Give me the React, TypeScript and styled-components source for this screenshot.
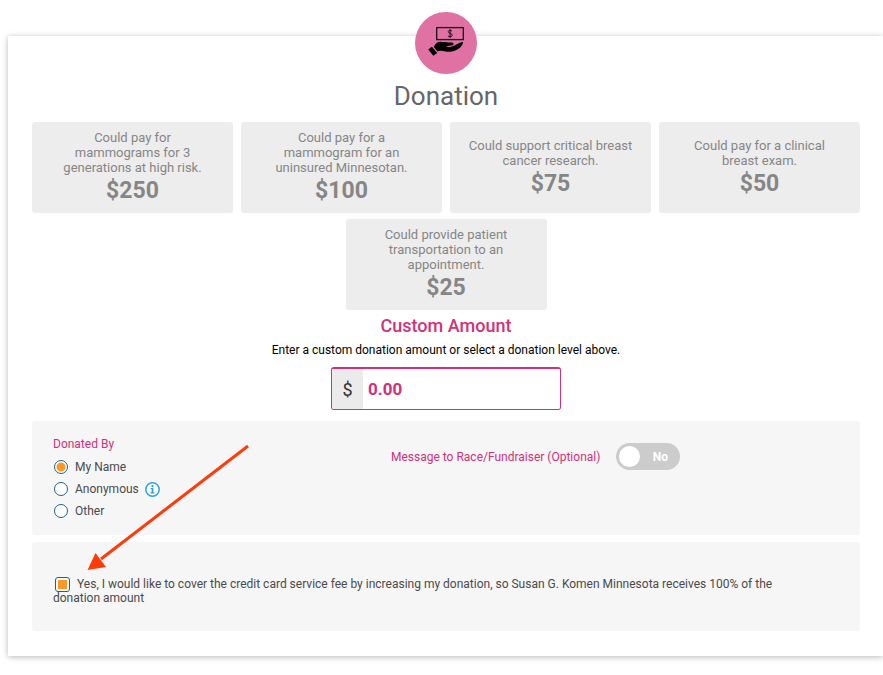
import React, { useState } from "react";
import styled, { createGlobalStyle, css } from "styled-components";

const colors = {
  pink: "#d13179",
  circle: "#df71a3",
  tile: "#ededed",
  tileText: "#868686",
  panel: "#f6f6f6",
  text: "#4a4a4a",
  outline: "#1b6386",
  orange: "#fd9827",
  arrow: "#ff3b0a",
};

const GlobalStyle = createGlobalStyle`
  *, *::before, *::after { box-sizing: border-box; }
  body {
    margin: 0;
    background: #fff;
    color: ${colors.text};
    font-family: Roboto, "Liberation Sans", sans-serif;
    font-size: 12px;
  }
  button, input { font-family: inherit; }
`;

const Page = styled.main`
  padding: 36px 0 16px 8px;
`;

const Card = styled.section`
  display: flex;
  flex-direction: column;
  align-items: center;
  padding: 0 23px 25px 24px;
  background: #fff;
  box-shadow: 0 1px 6px rgba(0, 0, 0, 0.28);
`;

const Emblem = styled.div`
  width: 62px;
  height: 62px;
  margin-top: -24px;
  border-radius: 50%;
  background: ${colors.circle};

  svg {
    display: block;
  }
`;

const Title = styled.h1`
  margin: 7px 0 11px;
  color: #666;
  font-size: 26px;
  font-weight: 400;
  line-height: 30px;
`;

const Levels = styled.div`
  display: flex;
  flex-wrap: wrap;
  justify-content: center;
  gap: 6px 8px;
  width: 100%;
`;

const Level = styled.button`
  display: flex;
  flex-direction: column;
  align-items: center;
  justify-content: center;
  width: calc((100% - 24px) / 4);
  min-height: 91px;
  padding: 8px 14px;
  border: 0;
  border-radius: 3px;
  background: ${colors.tile};
  color: ${colors.tileText};
  font-size: 13px;
  font-weight: 400;
  line-height: 15px;
  text-align: center;
  cursor: pointer;
`;

const LevelNote = styled.span`
  white-space: pre-line;
`;

const LevelAmount = styled.strong`
  margin-top: 2px;
  font-size: 23px;
  font-weight: 700;
  line-height: 28px;
`;

const CustomLabel = styled.label`
  margin-top: 5px;
  color: ${colors.pink};
  font-size: 18px;
  font-weight: 500;
  line-height: 22px;
`;

const Hint = styled.p`
  margin: 5px 0 9px;
  color: #000;
  font-size: 12px;
  line-height: 16px;
`;

const AmountField = styled.div`
  display: flex;
  width: 230px;
  height: 43px;
  border: 1px solid ${colors.pink};
  border-top-width: 2px;
  border-radius: 3px;
  overflow: hidden;
`;

const Currency = styled.span`
  display: flex;
  align-items: center;
  justify-content: center;
  width: 31px;
  background: #ebebeb;
  color: #333;
  font-size: 18px;
`;

const AmountInput = styled.input`
  flex: 1;
  min-width: 0;
  padding: 0 5px;
  border: 0;
  outline: 0;
  background: #fff;
  color: ${colors.pink};
  font-size: 17px;
  font-weight: 700;
`;

const Panel = styled.section`
  width: 100%;
  padding: 0 21px;
  border-radius: 3px;
  background: ${colors.panel};
`;

const DonorPanel = styled(Panel)`
  display: grid;
  grid-template-columns: 43% 1fr;
  align-items: start;
  margin-top: 11px;
  padding-top: 15px;
  padding-bottom: 13px;
`;

const FeePanel = styled(Panel)`
  margin-top: 7px;
  padding-top: 35px;
  padding-bottom: 26px;
  padding-right: 52px;
  line-height: 14px;
`;

const DonorGroup = styled.fieldset`
  margin: 0;
  padding: 0;
  border: 0;
`;

const Legend = styled.legend`
  margin-bottom: 4px;
  padding: 0;
  color: ${colors.pink};
  line-height: 16px;
`;

const OptionRow = styled.div`
  display: flex;
  align-items: center;
  height: 22px;
`;

const OptionLabel = styled.label`
  display: flex;
  align-items: center;
  gap: 7px;
`;

const choice = css`
  appearance: none;
  border: 1px solid ${colors.outline};
  background: #fff;
`;

const Radio = styled.input`
  ${choice}
  width: 14px;
  height: 14px;
  margin: 0 0 0 1px;
  border-radius: 50%;

  &:checked {
    background: radial-gradient(circle, ${colors.orange} 4px, #fff 5px);
  }
`;

const Checkbox = styled.input`
  ${choice}
  width: 15px;
  height: 15px;
  margin: -2px 7px -2px 2px;
  border-radius: 3px;
  vertical-align: middle;

  &:checked {
    background: linear-gradient(${colors.orange}, ${colors.orange}) center / 9px 9px no-repeat #fff;
  }
`;

const InfoButton = styled.button`
  display: flex;
  margin-left: 6px;
  padding: 0;
  border: 0;
  background: none;
  cursor: pointer;
`;

const MessageRow = styled.label`
  display: flex;
  align-items: center;
  gap: 16px;
  margin-top: 7px;
  color: ${colors.pink};
`;

const Switch = styled.span<{ $on: boolean }>`
  display: flex;
  flex-direction: ${(p) => (p.$on ? "row-reverse" : "row")};
  align-items: center;
  width: 64px;
  height: 27px;
  padding: 3px;
  border-radius: 14px;
  background: ${(p) => (p.$on ? colors.pink : "#ccc")};
  color: #fff;
  font-weight: 700;
`;

const SwitchInput = styled.input`
  appearance: none;
  flex: none;
  width: 21px;
  height: 21px;
  margin: 0;
  border-radius: 50%;
  background: #fff;
`;

const SwitchText = styled.span`
  flex: 1;
  padding-left: 3px;
  text-align: center;
`;

const Pointer = styled.svg`
  position: absolute;
  top: 440px;
  left: 84px;
  pointer-events: none;
`;

const levels = [
  { note: "Could pay for\nmammograms for 3\ngenerations at high risk.", amount: 250 },
  { note: "Could pay for a\nmammogram for an\nuninsured Minnesotan.", amount: 100 },
  { note: "Could support critical breast\ncancer research.", amount: 75 },
  { note: "Could pay for a clinical\nbreast exam.", amount: 50 },
  { note: "Could provide patient\ntransportation to an\nappointment.", amount: 25 },
];

const donors = ["My Name", "Anonymous", "Other"];

function HandMoneyIcon() {
  return (
    <svg width="62" height="62" viewBox="0 0 62 62" aria-hidden="true">
      <rect x="21.7" y="15.600" width="26.600" height="12" fill="none" stroke="#1c0d14" strokeWidth="1.300" />
      <path
        d="M37 19.300c-.4-.7-1.100-1-1.900-1-1.100 0-1.800.6-1.800 1.400 0 1.900 3.900 1.400 3.900 3.400 0 1-.9 1.600-2.100 1.600-1 0-1.800-.4-2.200-1.100M35.100 17.200v8.700"
        fill="none"
        stroke="#1c0d14"
        strokeWidth="1"
      />
      <path
        d="M18.800 35C20.200 31.500 22.600 29.700 25.800 29.700c3 .1 5.400.6 8.200.8 1.900.1 3.900-.2 4.500.9.600 1.200-.9 2-2.800 2.200l-4.600.6c1 .8 3.500.9 5.900.4 4.100-.9 5.800-4 11.300-4.500-.9 4.100-4 6.900-8 8.500-3.300 1.300-6.700 1.400-9.900.8-2.800-.6-5.400-1.300-7.700 0z"
        fill="#000"
      />
      <path d="m13.200 37.600 3.700-2.800 5.300 6.100-3.900 2.800z" fill="#000" />
    </svg>
  );
}

function InfoIcon() {
  return (
    <svg width="15" height="15" viewBox="0 0 15 15" aria-hidden="true">
      <circle cx="7.500" cy="7.500" r="6.700" fill="#fff" stroke="#2ba3dc" strokeWidth="1.500" />
      <path d="M6.500 3.100h1.900v1.800H6.500zM5.500 5.900h2.900v4.400h1.100v1.100h-4v-1.100h1.100V7H5.500z" fill="#2ba3dc" />
    </svg>
  );
}

export default function App() {
  const [amount, setAmount] = useState("0.00");
  const [donor, setDonor] = useState("My Name");
  const [message, setMessage] = useState(false);
  const [coverFee, setCoverFee] = useState(true);

  return (
    <>
      <GlobalStyle />
      <Page>
        <Card>
          <Emblem>
            <HandMoneyIcon />
          </Emblem>
          <Title>Donation</Title>
          <Levels>
            {levels.map((level) => (
              <Level key={level.amount} type="button" onClick={() => setAmount(level.amount.toFixed(2))}>
                <LevelNote>{level.note}</LevelNote>
                <LevelAmount>${level.amount}</LevelAmount>
              </Level>
            ))}
          </Levels>
          <CustomLabel htmlFor="amount">Custom Amount</CustomLabel>
          <Hint id="amount-hint">Enter a custom donation amount or select a donation level above.</Hint>
          <AmountField>
            <Currency>$</Currency>
            <AmountInput
              id="amount"
              inputMode="decimal"
              aria-describedby="amount-hint"
              value={amount}
              onChange={(e) => setAmount(e.target.value)}
            />
          </AmountField>
          <DonorPanel>
            <DonorGroup>
              <Legend>Donated By</Legend>
              {donors.map((name) => (
                <OptionRow key={name}>
                  <OptionLabel>
                    <Radio type="radio" name="donor" checked={donor === name} onChange={() => setDonor(name)} />
                    {name}
                  </OptionLabel>
                  {name === "Anonymous" && (
                    <InfoButton type="button" aria-label="About anonymous donations">
                      <InfoIcon />
                    </InfoButton>
                  )}
                </OptionRow>
              ))}
            </DonorGroup>
            <MessageRow>
              Message to Race/Fundraiser (Optional)
              <Switch $on={message}>
                <SwitchInput
                  type="checkbox"
                  role="switch"
                  checked={message}
                  onChange={(e) => setMessage(e.target.checked)}
                />
                <SwitchText>{message ? "Yes" : "No"}</SwitchText>
              </Switch>
            </MessageRow>
          </DonorPanel>
          <FeePanel>
            <label>
              <Checkbox type="checkbox" checked={coverFee} onChange={(e) => setCoverFee(e.target.checked)} />
              Yes, I would like to cover the credit card service fee by increasing my donation, so Susan G. Komen
              Minnesota receives 100% of the donation amount
            </label>
          </FeePanel>
        </Card>
      </Page>
      <Pointer width="170" height="134" viewBox="0 0 170 134" aria-hidden="true">
        <path d="M164 6 17 119" stroke={colors.arrow} strokeWidth="3" />
        <path d="M3.500 130 11.500 113 22 127z" fill={colors.arrow} />
      </Pointer>
    </>
  );
}
